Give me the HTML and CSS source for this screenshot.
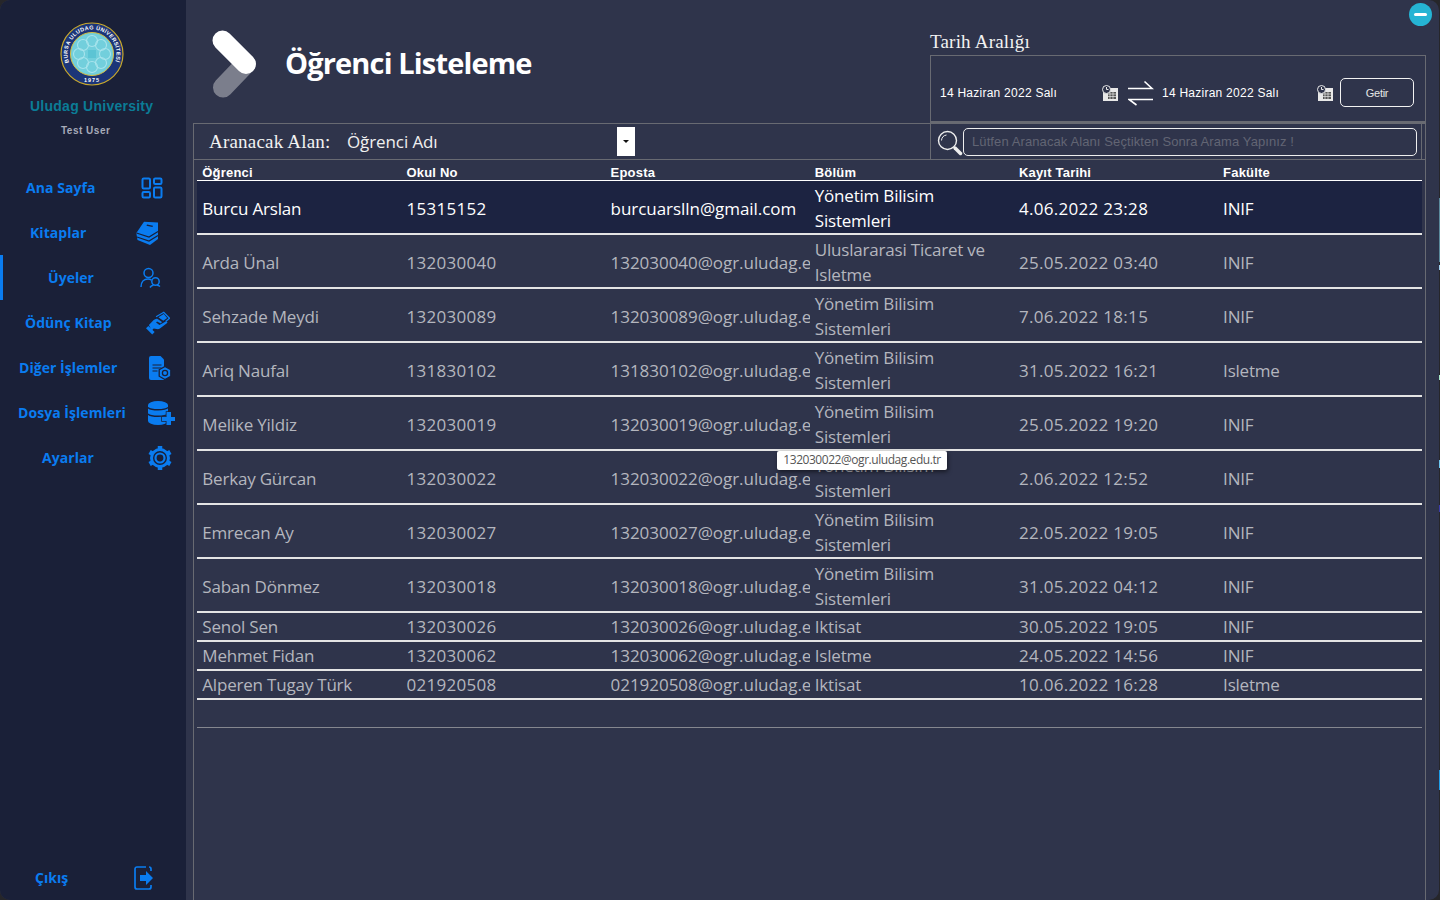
FILE: index.html
```html
<!DOCTYPE html>
<html lang="tr">
<head>
<meta charset="utf-8">
<title>Öğrenci Listeleme</title>
<link rel="stylesheet" href="styles.css">
</head>
<body>
<div class="app">
  <aside class="sidebar">
    <div class="brand">
      <svg class="seal" width="66" height="66" viewBox="0 0 66 66">
        <circle cx="33" cy="33" r="31" fill="#1c3578" stroke="#c9a92c" stroke-width="1.2"/>
        <circle cx="33" cy="33" r="21.5" fill="#72cfdc" stroke="#d8c040" stroke-width="1"/>
        <g fill="none" stroke="#a8e4ec" stroke-width="1.1">
          <circle cx="33" cy="20" r="5.5"/><circle cx="33" cy="46" r="5.5"/><circle cx="20" cy="33" r="5.5"/><circle cx="46" cy="33" r="5.5"/>
          <circle cx="24" cy="24" r="5.5"/><circle cx="42" cy="24" r="5.5"/><circle cx="24" cy="42" r="5.5"/><circle cx="42" cy="42" r="5.5"/>
        </g>
        <rect x="29" y="29" width="8" height="8" fill="#5cc4d4"/>
        <defs>
          <path id="sealTop" d="M10 41.400A24.500 24.500 0 1 1 56 41.400"/>
        </defs>
        <text class="seal-text" textLength="93"><textPath href="#sealTop">BURSA ULUDAG ÜNİVERSİTESİ</textPath></text>
        <text class="seal-year" x="33" y="60.500" text-anchor="middle">1975</text>
      </svg>
      <div class="uni-name">Uludag University</div>
      <div class="user-name">Test User</div>
    </div>
    <nav class="nav">
      <a class="nav-item ni-home"><span class="nav-label">Ana Sayfa</span>
        <svg class="nav-icon" viewBox="0 0 22 22" fill="none" stroke="currentColor" stroke-width="2"><rect x="1.500" y="1.500" width="7.500" height="10" rx="1.200"/><rect x="13" y="1.500" width="7.500" height="5.500" rx="1.200"/><rect x="1.500" y="15" width="7.500" height="5.500" rx="1.200"/><rect x="13" y="10.500" width="7.500" height="10" rx="1.200"/></svg></a>
      <a class="nav-item ni-books"><span class="nav-label">Kitaplar</span>
        <svg class="nav-icon wide" viewBox="0 0 24 24" fill="currentColor"><path d="M8 .7L22 1.500V18L14 24 1.500 19 .3 12z"/><path d="M.5 12l12.500 4 9-5.500M1 16l12 4 9-5.500" fill="none" stroke="#1a2038" stroke-width="1.200"/><path d="M11 3.500l6 1.200-.5 1.300-6-1.200z" fill="#1a2038"/></svg></a>
      <a class="nav-item ni-users is-active"><span class="nav-label">Üyeler</span>
        <svg class="nav-icon" viewBox="0 0 22 22" fill="none" stroke="currentColor" stroke-width="1.500"><circle cx="8.500" cy="6" r="4.500"/><path d="M1 20c0-5 3-8 7-8 1.500 0 2.500.4 3.500 1"/><circle cx="15.500" cy="14.500" r="3.700"/><path d="M20 19.500c-1-.8-2-1.200-3-1.200M10 20.500c.8-1.300 2-2 3.500-2.200"/></svg></a>
      <a class="nav-item ni-loan"><span class="nav-label">Ödünç Kitap</span>
        <svg class="nav-icon wide" viewBox="0 0 25 24" fill="currentColor"><path d="M0 17.500l2.500-2.500 6.500 6.500-2.500 2.500z"/><path d="M3 14L8 9c1.500-1.500 3-2 4.500-1l3.500 2.500c1 .8 0 2.200-1 1.700l-3.500-1.700-1 1 3.500 2.500 6.500-3.500c1.500-.7 2.500.8 1.200 1.800l-7.200 5.500c-1.200.7-2.500.7-3.500.5l-3-.5-2 2z"/><path d="M10.500 5.500L18.500 .8l6 6.200-4 3.500" fill="none" stroke="currentColor" stroke-width="1.400"/><path d="M13 6l5.500-3.300 3.500 4-4 3-3-2.200z"/></svg></a>
      <a class="nav-item ni-other"><span class="nav-label">Diğer İşlemler</span>
        <svg class="nav-icon wide" viewBox="0 0 24 24" fill="currentColor"><path d="M3 0h9.500l3.500 3.500V24H3a2 2 0 0 1-2-2V2a2 2 0 0 1 2-2z"/><path d="M4.500 9h9M4.500 12h9M4.500 15h5" stroke="#1a2038" stroke-width="1.200"/><path d="M17 10.500l5.800 3.300v6.400L17 23.500l-5.800-3.300v-6.400z" stroke="#1a2038" stroke-width="1.300"/><circle cx="17" cy="17" r="2.600" fill="none" stroke="#1a2038" stroke-width="1.300"/></svg></a>
      <a class="nav-item ni-files"><span class="nav-label">Dosya İşlemleri</span>
        <svg class="nav-icon xwide" viewBox="0 0 27 24" fill="currentColor"><path d="M0 4a10 4 0 0 1 20 0v16a10 4 0 0 1-20 0z"/><path d="M0 6.500c3 3 17 3 20 0M0 13c3 3 17 3 20 0" stroke="#1a2038" stroke-width="1.400" fill="none"/><path d="M18.500 11h4.500v5h4v4h-4v4h-4.500v-4H14v-4h4.500z" stroke="#1a2038" stroke-width="1.500" paint-order="stroke"/></svg></a>
      <a class="nav-item ni-settings"><span class="nav-label">Ayarlar</span>
        <svg class="nav-icon wide" viewBox="0 0 24 24" fill="none" stroke="currentColor"><circle cx="12" cy="12" r="8.500" stroke-width="3"/><path d="M12 0v4M12 20v4M1.600 6l3.500 2M18.900 16l3.500 2M1.600 18l3.500-2M18.900 8l3.500-2" stroke-width="4.500"/><circle cx="12" cy="12" r="4.500" stroke-width="2.200"/></svg></a>
    </nav>
    <a class="nav-item ni-exit"><span class="nav-label">Çıkış</span>
      <svg class="nav-icon exit" viewBox="0 0 20 24"><path d="M12 1H3a2 2 0 0 0-2 2v18a2 2 0 0 0 2 2h12a2 2 0 0 0 2-2v-2M17 5V3a2 2 0 0 0-2-2" fill="none" stroke="currentColor" stroke-width="1.700"/><path d="M6 9h6V5l7 7-7 7v-4H6z" fill="currentColor"/></svg></a>
  </aside>

  <main class="content">
    <header class="head">
      <svg class="chevron" width="46" height="68" viewBox="0 0 46 68" fill="none" stroke-linecap="round" stroke-width="20"><path d="M33.500 34L11 57.500" stroke="#7b7e8c"/><path d="M10.500 10.500L34 34" stroke="#fff"/></svg>
      <h1 class="title">Öğrenci Listeleme</h1>
      <section class="range">
        <h2 class="range-title">Tarih Aralığı</h2>
        <div class="range-box">
          <span class="date date-from">14 Haziran 2022 Salı</span>
          <svg class="cal" width="16" height="16" viewBox="0 0 16 16"><rect x="1" y="3" width="15" height="13" fill="#e8e8e8"/><rect x="6" y="7" width="8" height="7" fill="#555"/><path d="M6 9h8M6 11.500h8M8 7v7M11 7v7" stroke="#e8e8e8" stroke-width=".7"/><circle cx="4.500" cy="4.500" r="4" fill="#2f344b" stroke="#e8e8e8"/><path d="M4.500 2v2.500h2" stroke="#e8e8e8" fill="none"/></svg>
          <svg class="swap" width="26" height="26" viewBox="0 0 26 26" fill="none" stroke="#fff" stroke-width="1.600"><path d="M0 8.500h24L16.500 1.500M25 19.500H1L8.500 25"/></svg>
          <span class="date date-to">14 Haziran 2022 Salı</span>
          <svg class="cal" width="16" height="16" viewBox="0 0 16 16"><rect x="1" y="3" width="15" height="13" fill="#e8e8e8"/><rect x="6" y="7" width="8" height="7" fill="#555"/><path d="M6 9h8M6 11.500h8M8 7v7M11 7v7" stroke="#e8e8e8" stroke-width=".7"/><circle cx="4.500" cy="4.500" r="4" fill="#2f344b" stroke="#e8e8e8"/><path d="M4.500 2v2.500h2" stroke="#e8e8e8" fill="none"/></svg>
          <button class="fetch">Getir</button>
        </div>
      </section>
    </header>

    <section class="panel">
      <div class="filters">
        <span class="field-label">Aranacak Alan:</span>
        <div class="combo"><span class="combo-value">Öğrenci Adı</span><span class="combo-arrow"></span></div>
        <div class="search">
          <svg class="lens" width="26" height="26" viewBox="0 0 26 26" fill="none" stroke="#eee"><circle cx="10.500" cy="10.500" r="9" stroke-width="1.400"/><path d="M4.500 10.500a6 6 0 0 1 5-5.500" stroke-width="1"/><path d="M18 18l5.500 5.500" stroke-width="3.500" stroke-linecap="round"/></svg>
          <div class="search-input">Lütfen Aranacak Alanı Seçtikten Sonra Arama Yapınız !</div>
        </div>
      </div>
      <table class="grid">
        <thead>
          <tr><th>Öğrenci</th><th>Okul No</th><th>Eposta</th><th>Bölüm</th><th>Kayıt Tarihi</th><th>Fakülte</th></tr>
        </thead>
        <tbody>
          <tr class="tall selected"><td>Burcu Arslan</td><td>15315152</td><td><div class="clip">burcuarslln@gmail.com</div></td><td>Yönetim Bilisim Sistemleri</td><td>4.06.2022 23:28</td><td>INIF</td></tr>
          <tr class="tall"><td>Arda Ünal</td><td>132030040</td><td><div class="clip">132030040@ogr.uludag.edu.tr</div></td><td>Uluslararasi Ticaret ve Isletme</td><td>25.05.2022 03:40</td><td>INIF</td></tr>
          <tr class="tall"><td>Sehzade Meydi</td><td>132030089</td><td><div class="clip">132030089@ogr.uludag.edu.tr</div></td><td>Yönetim Bilisim Sistemleri</td><td>7.06.2022 18:15</td><td>INIF</td></tr>
          <tr class="tall"><td>Ariq Naufal</td><td>131830102</td><td><div class="clip">131830102@ogr.uludag.edu.tr</div></td><td>Yönetim Bilisim Sistemleri</td><td>31.05.2022 16:21</td><td>Isletme</td></tr>
          <tr class="tall"><td>Melike Yildiz</td><td>132030019</td><td><div class="clip">132030019@ogr.uludag.edu.tr</div></td><td>Yönetim Bilisim Sistemleri</td><td>25.05.2022 19:20</td><td>INIF</td></tr>
          <tr class="tall"><td>Berkay Gürcan</td><td>132030022</td><td><div class="clip">132030022@ogr.uludag.edu.tr</div></td><td>Yönetim Bilisim Sistemleri</td><td>2.06.2022 12:52</td><td>INIF</td></tr>
          <tr class="tall"><td>Emrecan Ay</td><td>132030027</td><td><div class="clip">132030027@ogr.uludag.edu.tr</div></td><td>Yönetim Bilisim Sistemleri</td><td>22.05.2022 19:05</td><td>INIF</td></tr>
          <tr class="tall"><td>Saban Dönmez</td><td>132030018</td><td><div class="clip">132030018@ogr.uludag.edu.tr</div></td><td>Yönetim Bilisim Sistemleri</td><td>31.05.2022 04:12</td><td>INIF</td></tr>
          <tr class="short"><td>Senol Sen</td><td>132030026</td><td><div class="clip">132030026@ogr.uludag.edu.tr</div></td><td>Iktisat</td><td>30.05.2022 19:05</td><td>INIF</td></tr>
          <tr class="short"><td>Mehmet Fidan</td><td>132030062</td><td><div class="clip">132030062@ogr.uludag.edu.tr</div></td><td>Isletme</td><td>24.05.2022 14:56</td><td>INIF</td></tr>
          <tr class="short"><td>Alperen Tugay Türk</td><td>021920508</td><td><div class="clip">021920508@ogr.uludag.edu.tr</div></td><td>Iktisat</td><td>10.06.2022 16:28</td><td>Isletme</td></tr>
        </tbody>
      </table>
      <div class="grid-end"></div>
    </section>
  </main>

  <button class="minimize" aria-label="Küçült"></button>
  <div class="tooltip">132030022@ogr.uludag.edu.tr</div>
</div>
</body>
</html>
```

FILE: styles.css
```css
* { box-sizing: border-box; }
html, body { margin: 0; height: 100%; overflow: hidden; }
body {
  background: linear-gradient(to bottom,
    #26262a 0 198px, #5a8a9c 198px 262px, #26262a 262px 265px, #9fd0ee 265px 270px,
    #26262a 270px 375px, #a8e8c8 375px 380px, #26262a 380px 460px, #6cc4ee 460px 468px,
    #26262a 468px 505px, #3a3aa8 505px 512px, #26262a 512px 770px, #1c9ce8 770px 790px,
    #26262a 790px);
}

.app {
  position: relative;
  display: flex;
  width: 1439px;
  height: 900px;
  background: #2f344b;
  border-radius: 10px;
  overflow: hidden;
  font-family: "Open Sans", "Noto Sans", sans-serif;
}

/* Sidebar */
.sidebar {
  flex: 0 0 186px;
  display: flex;
  flex-direction: column;
  background: #1a2038;
  color: #0a7cf0;
}
.brand { display: flex; flex-direction: column; height: 165px; padding-top: 21px; }
.seal { margin-left: 59px; flex: none; }
.seal-text { font: bold 5.500px "Liberation Sans", sans-serif; fill: #fff; }
.seal-year { font: bold 5.500px "Liberation Sans", sans-serif; fill: #fff; letter-spacing: 1px; }
.uni-name { margin: 11px 0 0 30px; font: bold 14px/16px "Liberation Sans", sans-serif; letter-spacing: .25px; color: #0b7c96; white-space: nowrap; }
.user-name { margin: 11px 0 0 61px; font: bold 10px/12px "Liberation Sans", sans-serif; letter-spacing: .5px; color: #a7abb8; }

.nav { display: flex; flex-direction: column; flex: 1; }
.nav-item { display: flex; align-items: center; height: 45px; padding-left: var(--lbl); padding-right: var(--ico); flex: none; }
.nav-label { font-size: 14px; font-weight: 700; letter-spacing: .05px; white-space: nowrap; }
.nav-icon { width: 22px; height: 22px; margin-left: auto; color: #0a7cf0; flex: none; }
.nav-icon.wide { width: 24px; height: 24px; }
.nav-icon.xwide { width: 27px; height: 24px; }
.nav-icon.exit { width: 20px; height: 24px; }
.is-active { box-shadow: inset 3px 0 0 #0a7cf0; }
.ni-home { --lbl: 26px; --ico: 23px; }
.ni-books { --lbl: 30px; --ico: 26px; }
.ni-users { --lbl: 48px; --ico: 24px; }
.ni-loan { --lbl: 25px; --ico: 16px; }
.ni-other { --lbl: 19px; --ico: 14px; }
.ni-files { --lbl: 18px; --ico: 11px; }
.ni-settings { --lbl: 42px; --ico: 14px; }
.ni-exit { --lbl: 35px; --ico: 32px; }

/* Main */
.content { flex: 1; display: flex; flex-direction: column; min-width: 0; }
.head { flex: 0 0 123px; display: flex; align-items: flex-start; padding: 30px 13px 0 26px; }
.chevron { flex: none; }
.title { margin: 13px 0 0 27px; font-size: 29px; line-height: 40px; font-weight: 700; color: #fff; letter-spacing: -.85px; white-space: nowrap; }
.range { margin-left: auto; width: 496px; flex: none; }
.range-title { margin: 0 0 1px; font: 400 19px/24px "Liberation Serif", serif; letter-spacing: .2px; color: #f2f2f2; }
.range-box { display: flex; align-items: center; height: 68px; padding: 8px 11px 0 9px; border: 1px solid #686a72; border-bottom-width: 2px; }
.date { font: 12px/16px "Liberation Sans", sans-serif; letter-spacing: .25px; color: #fff; white-space: nowrap; flex: none; }
.date-from { width: 162px; }
.date-to { width: 155px; }
.cal { flex: none; }
.swap { flex: none; margin: 0 8px 0 10px; }
.fetch { margin-left: 7px; width: 74px; height: 29px; padding: 0; background: transparent; border: 1px solid #f2f2f2; border-radius: 5px; font: 11px "Liberation Sans", sans-serif; letter-spacing: -.3px; color: #e6e6e6; }

.panel { flex: 1; min-height: 0; margin: 0 13px 0 7px; border: 1px solid #686a72; border-bottom: 0; }
.filters { display: flex; align-items: center; height: 36px; border-bottom: 1px solid #686a72; }
.field-label { margin-left: 15px; width: 138px; font: 19px/24px "Liberation Serif", serif; letter-spacing: .2px; color: #f2f2f2; white-space: nowrap; flex: none; }
.combo { display: flex; align-items: center; width: 288px; height: 29px; flex: none; }
.combo-value { flex: 1; font-size: 17px; letter-spacing: -.1px; color: #f0f0f0; white-space: nowrap; }
.combo-arrow { position: relative; width: 18px; height: 29px; background: #fff; }
.combo-arrow::after { content: ""; position: absolute; left: 6px; top: 13px; border: 3px solid transparent; border-top: 3px solid #111; border-bottom: 0; }
.search { display: flex; align-items: center; margin-left: auto; width: 492px; height: 35px; padding: 0 4px 0 6px; border-left: 1px solid #686a72; border-right: 1px solid #686a72; margin-right: 3px; flex: none; }
.lens { flex: none; margin-top: 2px; }
.search-input { flex: 1; height: 28px; padding: 0 8px; border: 1px solid #eee; border-radius: 5px; font: 13px/26px "Liberation Sans", sans-serif; letter-spacing: .1px; color: #626574; white-space: nowrap; overflow: hidden; }

.grid { table-layout: fixed; width: 1225px; margin-left: 3.300px; border-collapse: separate; border-spacing: 0; }
.grid th { height: 21px; padding: 5px 0 0 5px; border-bottom: 1px solid #fff; text-align: left; font: bold 13px/14px "Liberation Sans", sans-serif; color: #fff; letter-spacing: .2px; }
.grid td { padding: 2px 4px 0 5px; border-bottom: 2px solid #e4e4e4; font-size: 17px; line-height: 25px; letter-spacing: -.2px; color: #b4b6be; }
.grid td:nth-child(2), .grid td:nth-child(5) { letter-spacing: .3px; }
.grid td:nth-child(3) { letter-spacing: -.05px; padding-right: 0; }
.tall td { height: 54px; }
.short td { height: 29px; padding-top: 0; }
.selected td { background: #1c2341; color: #fff; }
.clip { overflow: hidden; white-space: nowrap; }
.grid-end { width: 1225px; margin: 27px 0 0 3px; border-top: 1px solid #85878f; }

/* Overlays */
.minimize { position: absolute; top: 3px; right: 7px; width: 23px; height: 23px; padding: 0; border: 0; border-radius: 50%; background: #25b4d4; }
.minimize::after { content: ""; position: absolute; left: 5px; top: 10px; width: 13px; height: 3px; border-radius: 2px; background: #fff; }
.tooltip { position: absolute; left: 777px; top: 451px; width: 170px; height: 19px; text-align: center; background: #fff; border-radius: 2px; box-shadow: 1px 2px 4px rgba(0,0,0,.5); font-size: 12px; line-height: 18px; letter-spacing: -.45px; color: #555; white-space: nowrap; }
```
